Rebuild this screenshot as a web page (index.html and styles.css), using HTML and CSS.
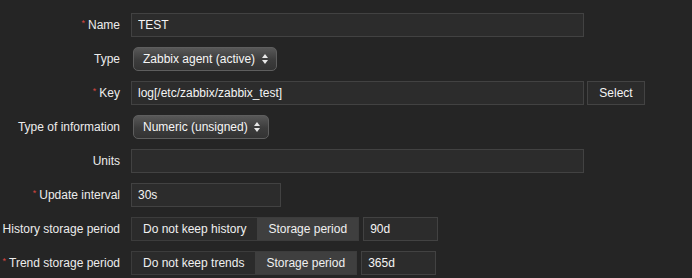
FILE: index.html
```html
<!DOCTYPE html>
<html lang="en">
<head>
    <meta charset="UTF-8">
    <title>Item</title>
    <link rel="stylesheet" href="styles.css">
</head>
<body>

    <form class="item-form">
        <label class="form-label required">Name</label>
        <div class="form-field">
            <input class="text-box wide" type="text" value="TEST">
        </div>

        <label class="form-label">Type</label>
        <div class="form-field">
            <div class="select type-select">Zabbix agent (active)<span class="arrows"></span></div>
        </div>

        <label class="form-label required">Key</label>
        <div class="form-field">
            <input class="text-box wide" type="text" value="log[/etc/zabbix/zabbix_test]">
            <button type="button" class="btn">Select</button>
        </div>

        <label class="form-label">Type of information</label>
        <div class="form-field">
            <div class="select info-select">Numeric (unsigned)<span class="arrows"></span></div>
        </div>

        <label class="form-label">Units</label>
        <div class="form-field">
            <input class="text-box wide" type="text" value="">
        </div>

        <label class="form-label required">Update interval</label>
        <div class="form-field">
            <input class="text-box medium" type="text" value="30s">
        </div>

        <label class="form-label">History storage period</label>
        <div class="form-field">
            <div class="radio-group">
                <span class="radio">Do not keep history</span>
                <span class="radio active">Storage period</span>
            </div>
            <input class="text-box short" type="text" value="90d">
        </div>

        <label class="form-label required">Trend storage period</label>
        <div class="form-field">
            <div class="radio-group">
                <span class="radio">Do not keep trends</span>
                <span class="radio active">Storage period</span>
            </div>
            <input class="text-box short" type="text" value="365d">
        </div>
    </form>

</body>
</html>
```

FILE: styles.css
```css
body {
    margin: 0;
    background-color: #252525;
    color: #f2f2f2;
    font-family: "Liberation Sans", Arial, sans-serif;
    font-size: 12px;
}

.item-form {
    display: grid;
    grid-template-columns: 120px auto;
    grid-auto-rows: 24px;
    column-gap: 11px;
    row-gap: 10px;
    padding-top: 13px;
}

.form-label {
    text-align: right;
    line-height: 24px;
    height: 24px;
    color: #ececec;
    white-space: nowrap;
}

.form-label.required::before {
    content: "*";
    position: relative;
    top: -3px;
    color: #d64541;
    font-size: 9px;
    line-height: 0;
    margin-right: 3px;
}

.form-field {
    display: flex;
    align-items: center;
    gap: 3px;
    height: 24px;
}

.text-box {
    box-sizing: border-box;
    height: 24px;
    padding: 0 6px;
    background-color: #2c2c2c;
    border: 1px solid #424242;
    color: #f4f4f4;
    font-family: inherit;
    font-size: 12px;
    outline: none;
}

.text-box.wide {
    width: 453px;
}

.text-box.medium {
    width: 150px;
}

.text-box.short {
    width: 75px;
    margin-left: 1px;
}

.btn {
    box-sizing: border-box;
    height: 24px;
    width: 58px;
    background-color: #2b2b2b;
    border: 1px solid #434343;
    color: #f4f4f4;
    font-family: inherit;
    font-size: 12px;
    padding: 0;
}

.select {
    position: relative;
    box-sizing: border-box;
    height: 24px;
    margin-left: 2px;
    padding: 0 0 0 9px;
    line-height: 22px;
    border: 1px solid #5e5e5e;
    border-radius: 5px;
    background: linear-gradient(#585858, #3c3c3c 55%, #333);
    color: #f6f6f6;
    white-space: nowrap;
}

.type-select {
    width: 144px;
}

.info-select {
    width: 136px;
}

.arrows::before,
.arrows::after {
    content: "";
    position: absolute;
    right: 8px;
    border-left: 3px solid transparent;
    border-right: 3px solid transparent;
}

.arrows::before {
    top: 6px;
    border-bottom: 4px solid #e8e8e8;
}

.arrows::after {
    top: 12px;
    border-top: 4px solid #e8e8e8;
}

.radio-group {
    display: flex;
    height: 24px;
    box-sizing: border-box;
    border: 1px solid #3c3c3c;
    background-color: #2b2b2b;
}

.radio {
    padding: 0 11px;
    line-height: 22px;
    color: #f0f0f0;
    white-space: nowrap;
}

.radio.active {
    background-color: #3f3f3f;
}
```
